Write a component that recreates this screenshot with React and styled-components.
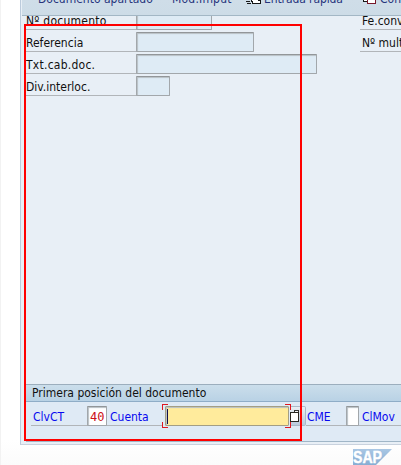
import React from "react";
import styled, { createGlobalStyle } from "styled-components";

const GlobalStyle = createGlobalStyle`
  *, *::before, *::after { box-sizing: border-box; }
  body { margin: 0; background: #fdfdfd; overflow: hidden; }
`;

const Screen = styled.div`
  position: relative;
  width: 401px;
  height: 465px;
  overflow: hidden;
  padding-left: 19px;
  border-left: 1px solid #f2f2f2;
  background: linear-gradient(#ffffff 440px, #fbfbfb);
  font: 12px/14px "DejaVu Sans Condensed", "DejaVu Sans", sans-serif;
  font-stretch: condensed;
  color: #101010;
`;

const Panel = styled.main`
  display: flex;
  flex-direction: column;
  width: 381px;
  height: 445px;
  border-left: 1px solid #bccbdc;
  border-bottom: 1px solid #c9d2de;
  background: #e8eff6;
`;

const Toolbar = styled.header`
  display: flex;
  flex: none;
  height: 16px;
  margin-left: 1px;
  padding-left: 16px;
  overflow: hidden;
  background: linear-gradient(#cfdde8, #cddce7);
  border-bottom: 1px solid #a3b7c5;
  color: #26347c;
`;

const Tool = styled.div`
  display: flex;
  flex: none;
  gap: 3px;
  width: ${(p) => p.$width}px;
  height: 14px;
  margin-top: -8px;
`;

const Text = styled.span`
  white-space: nowrap;
  letter-spacing: ${(p) => p.$track || 0}px;
`;

const Columns = styled.section`
  display: flex;
  flex: none;
  height: 368px;
  padding-left: 5px;
  overflow: hidden;
`;

const Column = styled.div`
  flex: none;
  width: ${(p) => p.$width}px;
  margin-top: -8px;
`;

const Row = styled.div`
  display: flex;
  align-items: flex-end;
  height: 22px;
`;

const Label = styled.label`
  flex: none;
  width: ${(p) => p.$width}px;
  height: 20px;
  padding: 4px 0 0 ${(p) => p.$indent || 0}px;
  border-bottom: 1px solid #b1b5b9;
  white-space: nowrap;
  letter-spacing: ${(p) => p.$track || 0}px;
  color: ${(p) => (p.$link ? "#0808ef" : "#101010")};
`;

const Field = styled.div`
  flex: none;
  width: ${(p) => p.$width}px;
  height: 20px;
  border: 1px solid #a2a7ab;
  border-top-color: #929699;
  border-radius: 1px;
  background: ${(p) => p.$fill || "#deebf5"};
  box-shadow: inset 1px 1px 1px #b8c0c5;
`;

const CodeField = styled(Field)`
  padding: 3px 0 0 2px;
  color: #cc1018;
  font: 12px/14px "DejaVu Sans Mono", monospace;
`;

const ActiveField = styled(Field)`
  position: relative;
  margin: 0 1px 0 2px;
  padding: 2px 0 0 1px;
  border-color: #a39e84;
`;

const Caret = styled.i`
  display: block;
  width: 1px;
  height: 15px;
  background: #10104c;
`;

const Corner = styled.i`
  position: absolute;
  width: 6px;
  height: 6px;
  border: 0 solid #dd1820;
  ${(p) => (p.$bottom ? "bottom: -3px; border-bottom-width: 1px;" : "top: -3px; border-top-width: 1px;")}
  ${(p) => (p.$right ? "right: -3px; border-right-width: 1px;" : "left: -4px; border-left-width: 1px;")}
`;

const GroupTitle = styled.h2`
  flex: none;
  height: 18px;
  margin: 0 0 0 5px;
  padding: 1px 0 0 6px;
  border-top: 1px solid #9caebd;
  border-bottom: 1px solid #8fadc7;
  background: linear-gradient(#cbdeeb, #b9d2e5);
  font: inherit;
`;

const EntryGroup = styled.section`
  flex: none;
  height: 40px;
  margin-left: 5px;
  padding: 2px 0 0 5px;
  border-bottom: 1px solid #a0b6c7;
  background: #dfeaf5;
`;

const MatchButton = styled.button`
  flex: none;
  width: 16px;
  height: 20px;
  padding: 0;
  border: 1px solid #aab9c8;
  border-left: 0;
  border-radius: 0 2px 2px 0;
  background: linear-gradient(#e9eef3, #b9cadd);
`;

const Highlight = styled.div`
  position: absolute;
  left: 23px;
  top: 24px;
  width: 278px;
  height: 417px;
  border: 2px solid #ff0000;
`;

const Footer = styled.footer`
  height: 20px;
  padding: 4px 0 0 333px;
`;

function FastEntryIcon() {
  return (
    <svg width="15" height="14" shapeRendering="crispEdges">
      <path d="M5.5 4.5h7v4h2v3h-8v-2h-1z" fill="#fff" stroke="#171717" />
      <path d="M0 9.5h4M1 11.5h4" stroke="#171717" />
    </svg>
  );
}

function CopyIcon() {
  return (
    <svg width="14" height="14" shapeRendering="crispEdges">
      <path d="M0.5 3.5h8v6h-8z" fill="#fff" stroke="#171717" />
      <path d="M4.5 5.5h8v6h-8z" fill="#fff" stroke="#78182a" />
    </svg>
  );
}

function MatchIcon() {
  return (
    <svg width="15" height="18" display="block" shapeRendering="crispEdges">
      <path d="M4.5 5v-2h4v2" fill="#f4f4f4" stroke="#333" />
      <path d="M10.5 4v10" stroke="#8d949c" />
      <path d="M0.5 5.5h8v9h-8z" fill="#fff" stroke="#28251f" />
    </svg>
  );
}

function SapLogo() {
  return (
    <svg width="40" height="17" viewBox="0 0 40 17" display="block">
      <defs>
        <linearGradient id="sap" x1="0" y1="0" x2="0" y2="1">
          <stop stopColor="#a9c7e4" />
          <stop offset="1" stopColor="#86acd2" />
        </linearGradient>
      </defs>
      <path d="M0 0h39L22 17H0z" fill="url(#sap)" />
      <text x="0" y="14" textLength="29" lengthAdjust="spacingAndGlyphs" fontFamily="Liberation Sans, sans-serif" fontWeight="700" fontSize="16" fill="#fff" stroke="#fff" strokeWidth="0.4">SAP</text>
    </svg>
  );
}

const rows = [
  { label: "Nº documento", width: 76, track: 0.25 },
  { label: "Referencia", width: 118, track: 0 },
  { label: "Txt.cab.doc.", width: 181, track: 0.25 },
  { label: "Div.interloc.", width: 34, track: 0 },
];

export default function App() {
  return (
    <>
      <GlobalStyle />
      <Screen>
        <Panel>
          <Toolbar>
            <Tool $width={134}><Text>Documento apartado</Text></Tool>
            <Tool $width={74}><Text $track={0.2}>Mod.Imput</Text></Tool>
            <Tool $width={117}><FastEntryIcon /><Text $track={-0.1}>Entrada rápida</Text></Tool>
            <Tool $width={50}><CopyIcon /><Text>Cont</Text></Tool>
          </Toolbar>
          <Columns>
            <Column $width={334}>
              {rows.map((r) => (
                <Row key={r.label}>
                  <Label $width={110} $track={r.track}>{r.label}</Label>
                  <Field $width={r.width} />
                </Row>
              ))}
            </Column>
            <Column $width={60}>
              <Row><Label $width={60} $indent={2}>Fe.conv.</Label></Row>
              <Row><Label $width={60} $indent={2}>Nº multisoc.</Label></Row>
            </Column>
          </Columns>
          <GroupTitle>Primera posición del documento</GroupTitle>
          <EntryGroup>
            <Row>
              <Label $width={56} $indent={2} $link>ClvCT</Label>
              <CodeField $width={20} $fill="#fff">40</CodeField>
              <Label $width={56} $indent={3} $link>Cuenta</Label>
              <ActiveField $width={124} $fill="#ffeb9c">
                <Caret />
                <Corner /><Corner $right /><Corner $bottom /><Corner $right $bottom />
              </ActiveField>
              <MatchButton aria-label="Buscar"><MatchIcon /></MatchButton>
              <Label $width={40} $indent={1} $link>CME</Label>
              <Field $width={13} $fill="#fff" />
              <Label $width={50} $indent={3} $link>ClMov</Label>
            </Row>
          </EntryGroup>
        </Panel>
        <Footer><SapLogo /></Footer>
        <Highlight />
      </Screen>
    </>
  );
}
